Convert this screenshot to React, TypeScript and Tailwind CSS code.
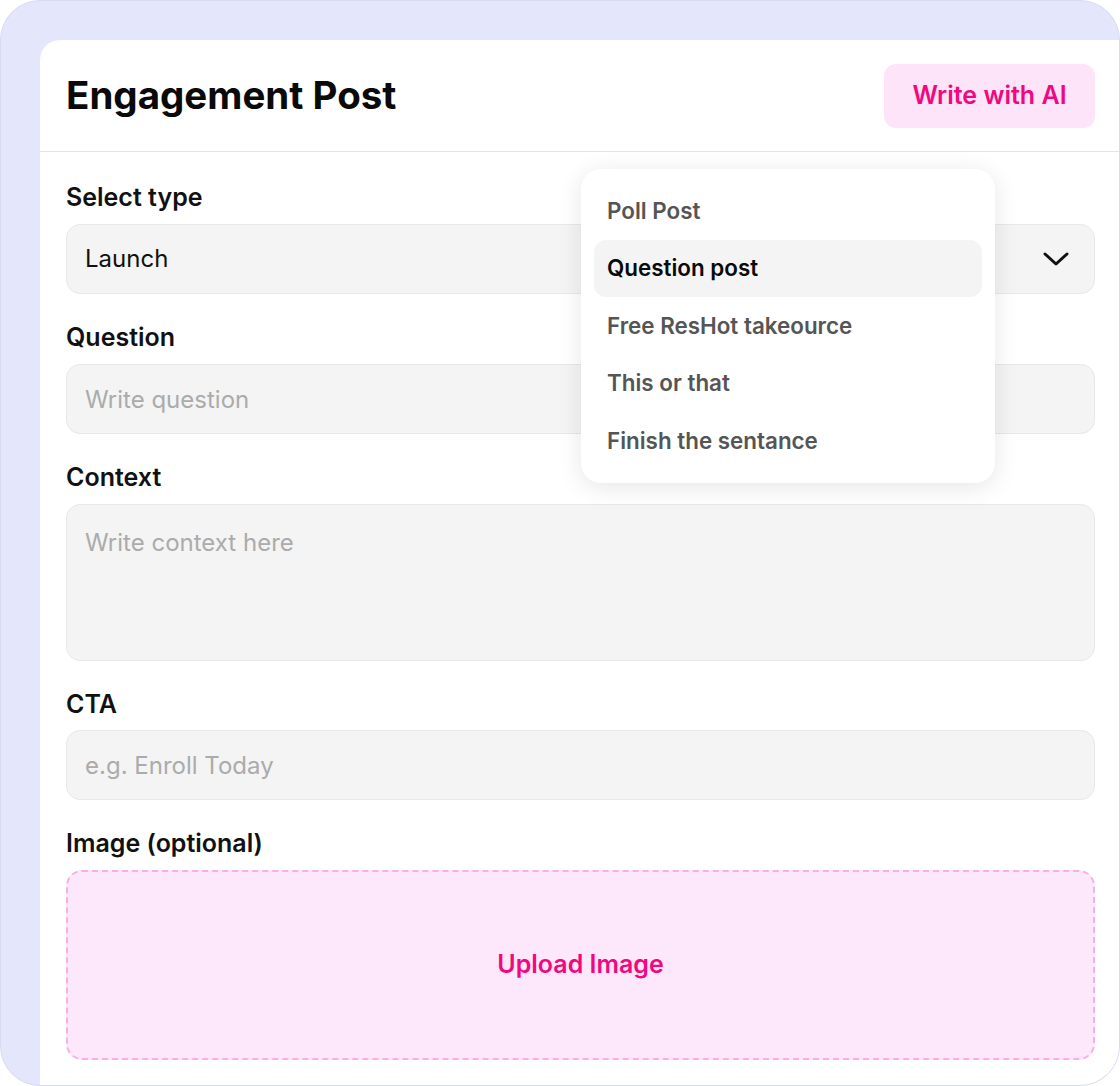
const TYPES = ["Poll Post", "Question post", "Free ResHot takeource", "This or that", "Finish the sentance"];

function Chevron() {
  return (
    <svg width="26" height="14" viewBox="0 0 26 14" fill="none">
      <path d="M2 2l11 10L24 2" stroke="#111" strokeWidth="3" strokeLinecap="round" strokeLinejoin="round" />
    </svg>
  );
}

function Label({ children }: { children: React.ReactNode }) {
  return <label className="block text-[25px] leading-7 font-semibold text-[#111]">{children}</label>;
}

const fieldBase =
  "w-full rounded-[14px] border border-[#e8e8e8] bg-[#f4f4f4] px-[18px] text-[24px] text-[#111] placeholder:text-[#ababab] outline-none";

export default function App() {
  return (
    <div className="w-[1120px] h-[1086px] font-['Inter',sans-serif]">
      <div className="h-full overflow-hidden rounded-[40px] border border-[#d8dbf0] bg-[#e4e7fc] pl-[39px] pt-[39px]">
        <div className="relative h-full rounded-tl-[20px] bg-white">
          {/* Header */}
          <div className="flex h-[112px] items-center justify-between border-b border-[#e4e4e4] pl-[26px] pr-6">
            <h1 className="text-[38.5px] font-bold text-[#0a0a0a]">Engagement Post</h1>
            <button className="h-16 w-[211px] rounded-[12px] bg-[#fde4f8] text-[25px] font-semibold text-[#f2077f]">
              Write with AI
            </button>
          </div>

          {/* Form */}
          <div className="flex flex-col gap-[29px] pl-[26px] pr-6 pt-[31px]">
            <div className="flex flex-col gap-[13px]">
              <Label>Select type</Label>
              <div className="flex h-[70px] items-center justify-between rounded-[14px] border border-[#e8e8e8] bg-[#f4f4f4] pl-[18px] pr-[25px]">
                <span className="text-[24px] text-[#111]">Launch</span>
                <Chevron />
              </div>
            </div>

            <div className="flex flex-col gap-[13px]">
              <Label>Question</Label>
              <input className={`${fieldBase} h-[70px]`} placeholder="Write question" />
            </div>

            <div className="flex flex-col gap-[13px]">
              <Label>Context</Label>
              <textarea className={`${fieldBase} h-[157px] resize-none py-[24px] leading-7`} placeholder="Write context here" />
            </div>

            <div className="flex flex-col gap-3">
              <Label>CTA</Label>
              <input className={`${fieldBase} h-[70px]`} placeholder="e.g. Enroll Today" />
            </div>

            <div className="flex flex-col gap-[13px]">
              <Label>Image (optional)</Label>
              <div className="flex h-[190px] items-center justify-center rounded-[16px] border-2 border-dashed border-[#f7b0e2] bg-[#fde8fb]">
                <span className="text-[25px] font-semibold text-[#f2077f]">Upload Image</span>
              </div>
            </div>
          </div>

          {/* Dropdown menu */}
          <div className="absolute left-[541px] top-[129px] w-[414px] rounded-[20px] bg-white p-[13px] shadow-[0_4px_24px_rgba(0,0,0,0.10)]">
            {TYPES.map((t, i) => (
              <div
                key={t}
                className={`flex h-[57.5px] items-center rounded-[12px] px-[13px] text-[22.4px] font-semibold ${
                  i === 1 ? "bg-[#f4f4f4] text-[#0a0a0a]" : "text-[#555]"
                }`}
              >
                {t}
              </div>
            ))}
          </div>
        </div>
      </div>
    </div>
  );
}
